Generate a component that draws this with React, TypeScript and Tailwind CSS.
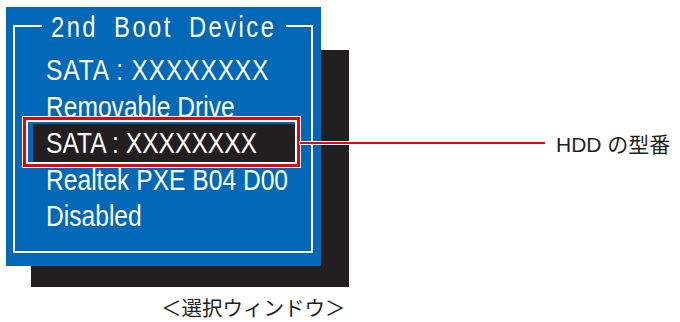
import React from 'react';

const lines = ['SATA : XXXXXXXX', 'Removable Drive', 'SATA : XXXXXXXX', 'Realtek PXE B04 D00', 'Disabled'];
const selected = 2;

// BIOS text is a condensed face; squeeze Liberation Sans to match
function Narrow({ children, className = '' }: { children: React.ReactNode; className?: string }) {
  return (
    <span className={`inline-block origin-left scale-x-[0.82] whitespace-nowrap ${className}`}>{children}</span>
  );
}

export default function App() {
  return (
    <div
      className="relative w-[680px] h-[322px] overflow-hidden bg-white pt-[7px] pl-[6px]"
      style={{ fontFamily: '"Liberation Sans", Arial, sans-serif' }}
    >
      {/* drop shadow behind the window */}
      <div className="absolute left-[31px] top-[50px] w-[318px] h-[237px] bg-[#231f20]" />

      <div className="relative z-10 w-[315px] h-[259px] bg-[#0068b6] pt-[18px] pl-[7px]">
        <div className="relative flex flex-col w-[300px] h-[228px] border-2 border-white pt-[25px] pl-[31px] text-white text-[30px] leading-[36.5px]">
          <div className="absolute left-[27px] -top-[14px] w-[244px] h-[29px] bg-[#0068b6] pl-[9px] text-[29px] leading-[29px]">
            <Narrow className="tracking-[3px] [word-spacing:8.5px]">2nd Boot Device</Narrow>
          </div>

          {lines.map((line, i) =>
            i === selected ? (
              <div
                key={i}
                className="relative -ml-[13px] pl-[13px] w-[262px] bg-[#231f20] -my-[1.5px] py-[1.5px]"
              >
                <Narrow>{line}</Narrow>
                <div className="absolute -left-[10px] -right-[5px] -top-[6.5px] -bottom-[4px] border-[3px] border-[#e60012] shadow-[0_0_0_1px_#ffffff,inset_0_0_0_2px_#ffffff]">
                  <div className="absolute left-full top-[22px] ml-[3px] w-[245px] h-[2px] bg-[#e60012] shadow-[0_0_0_1px_#ffffff]" />
                </div>
              </div>
            ) : (
              <div key={i}>
                <Narrow className={i === 0 ? 'tracking-[1px]' : ''}>{line}</Narrow>
              </div>
            )
          )}
        </div>
      </div>

      <div
        className="absolute left-[556px] top-[133px] text-[21px] leading-[24px] text-[#231f20]"
        style={{ fontFamily: '"Liberation Sans", "Noto Sans CJK JP", sans-serif' }}
      >
        HDD の型番
      </div>

      <div
        className="mt-[31px] ml-[155px] text-[20.5px] leading-[20px] text-[#231f20]"
        style={{ fontFamily: '"Noto Sans CJK JP", sans-serif' }}
      >
        ＜選択ウィンドウ＞
      </div>
    </div>
  );
}
